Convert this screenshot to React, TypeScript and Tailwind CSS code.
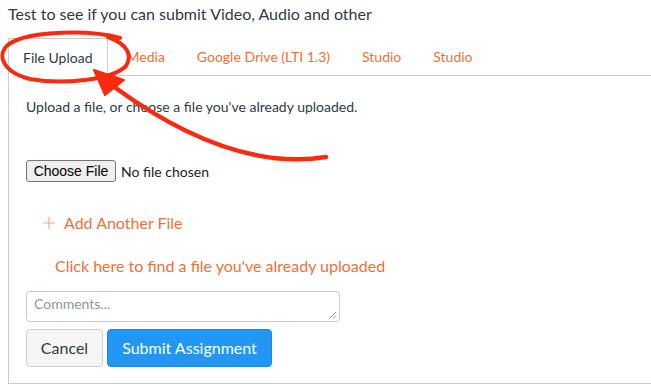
import React from "react";

const orange = "text-[#f0703c]";

export default function App() {
  return (
    <div className="relative w-[651px] h-[392px] overflow-hidden bg-white text-[#2d3b45]" style={{ fontFamily: "Lato, 'Open Sans', sans-serif" }}>
      <div className="pl-[8px] pt-[3px] text-[16px] leading-[22px]">Test to see if you can submit Video, Audio and other</div>
      <div className="ml-[8px] mt-[13px] flex border-b border-[#c7cdd1] text-[14px] leading-[20px] w-[700px]">
        <div className="-mb-px h-[38px] flex items-center px-[14px] border border-b-0 border-[#c7cdd1] bg-white text-[#2d3b45]">File Upload</div>
        <div className={`h-[37px] flex items-center pl-[19px] pr-[16px] ${orange}`}>Media</div>
        <div className={`h-[37px] flex items-center px-[16px] ${orange}`}>Google Drive (LTI 1.3)</div>
        <div className={`h-[37px] flex items-center px-[16px] ${orange}`}>Studio</div>
        <div className={`h-[37px] flex items-center px-[16px] ${orange}`}>Studio</div>
      </div>
      <div className="ml-[8px] w-[700px] h-[308px] border-l border-b border-[#c7cdd1] pl-[17px] pt-[21px]">
        <div className="text-[14px] leading-[20px]">Upload a file, or choose a file you've already uploaded.</div>
        <div className="mt-[43px] flex items-center h-[22px]">
          <div className="h-[22px] w-[90px] flex items-center justify-center border border-[#767676] rounded-[3px] bg-[#efefef] text-black text-[14px]" style={{ fontFamily: "'Liberation Sans', Arial, sans-serif" }}>Choose File</div>
          <span className="ml-[5px] text-[14px] text-[#222]">No file chosen</span>
        </div>
        <div className={`mt-[30px] ml-[17px] flex items-center h-[22px] text-[16px] ${orange}`}>
          <svg width="12" height="12" viewBox="0 0 12 12" className="mr-[9px]">
            <path d="M6 0 V12 M0 6 H12" stroke="#f7a987" strokeWidth="1.2" fill="none" />
          </svg>
          <span>Add Another File</span>
        </div>
        <div className={`mt-[21px] ml-[29px] h-[22px] leading-[22px] text-[16px] ${orange}`}>Click here to find a file you've already uploaded</div>
        <div className="mt-[14px] relative w-[314px] h-[31px] border border-[#c7cdd1] rounded-[4px] px-[7px] pt-[2px] text-[14px] leading-[20px] text-[#8b969e]">
          Comments...
          <svg width="8" height="8" viewBox="0 0 8 8" className="absolute right-[2px] bottom-[2px]">
            <path d="M7 1 L1 7 M7 4.5 L4.5 7" stroke="#777" strokeWidth="0.8" />
          </svg>
        </div>
        <div className="mt-[7px] flex gap-[4px] text-[16px]">
          <div className="w-[77px] h-[38px] flex items-center justify-center bg-[#f5f5f5] border border-[#c7cdd1] rounded-[4px] text-[#2d3b45]">Cancel</div>
          <div className="w-[165px] h-[38px] flex items-center justify-center bg-[#2196f3] border border-[#1b88e0] rounded-[4px] text-white">Submit Assignment</div>
        </div>
      </div>
      <svg className="absolute left-0 top-0 pointer-events-none" width="651" height="392" viewBox="0 0 651 392">
        <path d="M120 38 C 92 30, 30 30, 9 44 C -4 54, 2 72, 30 79 C 62 85, 112 80, 126 66 C 133 55, 127 44, 108 37"
          fill="none" stroke="#fa2a10" strokeWidth="4" strokeLinecap="round" />
        <path d="M326 157 Q 230 172 113 86" fill="none" stroke="#fa2a10" strokeWidth="4.5" strokeLinecap="round" />
        <polygon points="94,70 105,95 124,80" fill="#fa2a10" stroke="#fa2a10" strokeWidth="2" strokeLinejoin="round" />
      </svg>
    </div>
  );
}
